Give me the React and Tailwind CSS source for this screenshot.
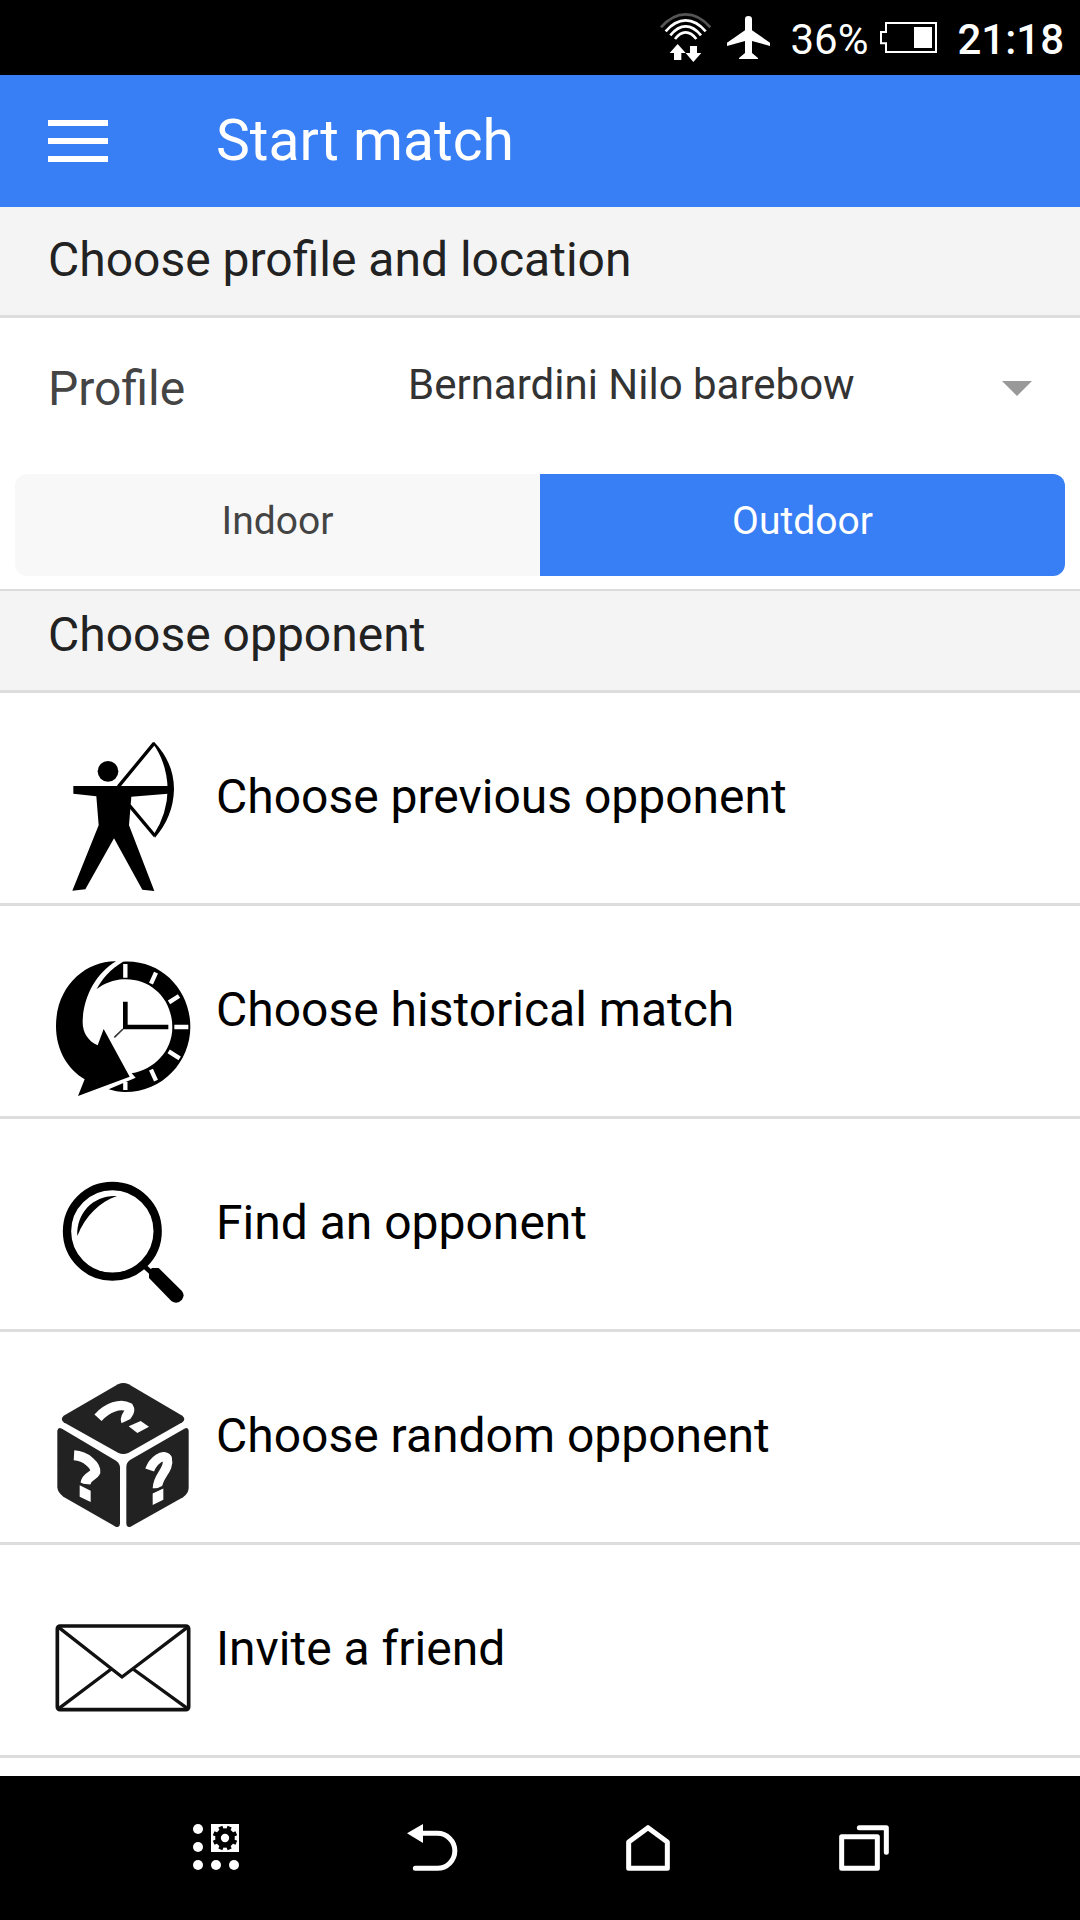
import React, { useState } from 'react';

const WifiIcon = () => (
  <svg viewBox="57 0 153 225" className="h-[75px] w-[51px]" fill="none" strokeWidth="8" aria-hidden="true">
    <path d="M60 82 Q94 43 134 43 Q174 43 208 82" stroke="#555" />
    <path d="M74 94 Q102 61 134 61 Q166 61 194 94" stroke="#fff" />
    <path d="M88 106 Q110 79 134 79 Q158 79 180 106" stroke="#fff" />
    <path d="M102 117 Q117 97 134 97 Q151 97 166 117" stroke="#fff" />
    <path d="M110 132 L134 159 H121 V180 H99 V159 H86 Z" fill="#fff" />
    <path d="M157 186 L181 159 H168 V138 H147 V159 H134 Z" fill="#fff" />
  </svg>
);

const PlaneIcon = () => (
  <svg viewBox="258 0 129 225" className="h-[75px] w-[43px]" fill="#fff" aria-hidden="true">
    <path d="M312 58 Q312 48 322 48 Q333 48 333 58 V91 L387 128 V138 L333 123 V159 L351 174 V177 H294 V174 L312 159 V123 L258 138 V128 L312 91 Z" />
  </svg>
);

const BatteryIcon = () => (
  <svg viewBox="717 0 171 225" className="h-[75px] w-[57px]" aria-hidden="true">
    <path d="M735 69 H885 V156 H735 V130 H720 V96 H735 Z" fill="none" stroke="#fff" strokeWidth="6" />
    <rect x="819" y="81" width="54" height="63" fill="#fff" />
  </svg>
);

const ArcherIcon = () => (
  <svg viewBox="24 18 432 504" className="h-[168px] w-36" aria-hidden="true">
    <circle cx="204" cy="154" r="31" />
    <path d="M100 198 H384 V221 L274 230 L267 316 L343 513 L307 509 L222 355 L136 508 L97 512 L176 316 L169 229 L100 221 Z" />
    <path d="M235 200 L342 70 M268 256 L345 348" fill="none" stroke="#000" strokeWidth="10" />
    <path d="M342 65 Q402 128 402 208 Q400 290 345 353 L341 344 Q382 282 383 208 Q381 128 338 70 Z" />
  </svg>
);

const HistoryIcon = () => (
  <svg viewBox="24 -3 432 504" className="h-[168px] w-36" aria-hidden="true">
    <path d="M228 64 C140 62 48 136 48 258 C48 332 84 388 134 418 L114 468 L269 410 L191 267 L173 316 C143 303 127 276 128 244 C130 170 168 100 228 64 Z" />
    <path d="M249 65 C366 58 451 152 451 260 C451 366 367 457 254 456 C238 456 221 453 206 448 L287 413 L275 400 C342 389 397 334 397 262 C397 174 330 114 250 118 C220 120 194 130 170 147 C186 118 211 87 249 65 Z" />
    <path
      d="M256 72 V113 M348 98 L333 131 M417 168 L387 187 M403 261 H445 M386 334 L419 355 M333 389 L348 422 M256 426 V450"
      fill="none"
      stroke="#fff"
      strokeWidth="13"
    />
    <path d="M249 185 H263 V254 H385 V268 H249 Z" />
    <path d="M249 267 L223 292" fill="none" stroke="#333" strokeWidth="5" />
  </svg>
);

const SearchIcon = () => (
  <svg viewBox="24 -24 432 504" className="h-[168px] w-36" aria-hidden="true">
    <circle cx="217" cy="214" r="136" fill="none" stroke="#000" strokeWidth="25" />
    <path d="M112 228 C109 156 163 104 231 108 C180 126 137 165 112 228 Z" />
    <path d="M312 318 L336 340" stroke="#000" strokeWidth="14" />
    <path d="M336 324 H356 L425 392 Q436 405 426 419 Q411 435 394 423 L327 354 V332 Z" />
  </svg>
);

const DiceIcon = () => (
  <svg viewBox="24 -15 432 504" className="h-[168px] w-36" fill="#222" aria-hidden="true">
    <path d="M234 43 Q250 35 266 43 L427 137 Q439 147 427 157 L266 248 Q250 256 234 248 L71 157 Q60 147 71 137 Z" />
    <path d="M52 182 Q54 170 66 176 L228 272 Q240 281 240 292 V460 Q239 474 227 470 L70 380 Q53 368 52 352 Z" />
    <path d="M446 182 Q445 170 433 176 L270 270 Q259 278 259 290 V460 Q260 474 272 470 L429 382 Q445 371 446 354 Z" />
    <g fill="none" stroke="#fff">
      <path d="M174 143 C202 112 242 98 266 112 C278 130 246 138 260 158" strokeWidth="29" />
      <path d="M102 256 C140 258 168 288 166 306 C160 320 138 318 136 342" strokeWidth="30" />
      <path d="M329 300 C340 270 370 250 382 266 C390 300 352 316 352 355" strokeWidth="28" />
    </g>
    <g fill="#fff">
      <path d="M266 169 L302 153 L327 170 L292 189 Z" />
      <path d="M119 346 L152 362 V396 L119 380 Z" />
      <path d="M338 370 L370 355 V389 L338 405 Z" />
    </g>
    <path d="M238 163 L276 145 L286 151 L258 172 Z M112 333 L156 354 V361 L112 340 Z M334 363 L374 344 V353 L334 372 Z" />
  </svg>
);

const MailIcon = () => (
  <svg viewBox="24 -66 432 504" className="h-[168px] w-36" fill="none" stroke="#111" aria-hidden="true">
    <rect x="52" y="78" width="394" height="251" rx="8" strokeWidth="11" />
    <path d="M56 82 L246 231 L442 82 M214 207 L56 326 M279 207 L443 326" strokeWidth="10" />
  </svg>
);

const AppsIcon = () => (
  <svg viewBox="87 153 162 162" className="size-[54px]" fill="#fff" aria-hidden="true">
    <circle cx="114" cy="177" r="15" />
    <circle cx="114" cy="231" r="15" />
    <circle cx="114" cy="285" r="15" />
    <circle cx="168" cy="285" r="15" />
    <circle cx="222" cy="285" r="15" />
    <rect x="153" y="162" width="84" height="84" />
    <circle cx="195" cy="204" r="21" fill="none" stroke="#000" strokeWidth="17" />
    <path
      d="M204 182 L209 170 M217 195 L229 190 M217 213 L229 218 M204 226 L209 238 M186 226 L181 238 M173 213 L161 218 M173 195 L161 190 M186 182 L181 170"
      fill="none"
      stroke="#000"
      strokeWidth="13"
    />
  </svg>
);

const BackIcon = () => (
  <svg viewBox="735 153 162 162" className="size-[54px]" fill="none" aria-hidden="true">
    <path d="M741 190 L789 162 V219 Z" fill="#fff" />
    <path d="M785 190 H832 A52 52 0 0 1 832 295 H766" stroke="#fff" strokeWidth="15" strokeLinecap="round" />
  </svg>
);

const HomeIcon = () => (
  <svg viewBox="123 153 162 162" className="size-[54px]" fill="none" aria-hidden="true">
    <path d="M146 216 L204 173 L262 216 V295 H146 Z" stroke="#fff" strokeWidth="15" strokeLinejoin="round" />
  </svg>
);

const RecentIcon = () => (
  <svg
    viewBox="771 153 162 162"
    className="size-[54px]"
    fill="none"
    stroke="#fff"
    strokeWidth="15"
    strokeLinejoin="round"
    strokeLinecap="round"
    aria-hidden="true"
  >
    <rect x="785" y="200" width="107" height="95" />
    <path d="M838 173 H919 V247" />
  </svg>
);

const options = [
  { label: 'Choose previous opponent', Icon: ArcherIcon },
  { label: 'Choose historical match', Icon: HistoryIcon },
  { label: 'Find an opponent', Icon: SearchIcon },
  { label: 'Choose random opponent', Icon: DiceIcon },
  { label: 'Invite a friend', Icon: MailIcon },
];

const navItems = [
  { label: 'Apps', Icon: AppsIcon },
  { label: 'Back', Icon: BackIcon },
  { label: 'Home', Icon: HomeIcon },
  { label: 'Recent', Icon: RecentIcon },
];

const App = () => {
  const [location, setLocation] = useState('Outdoor');

  return (
    <div className="flex min-h-screen flex-col bg-white font-['Roboto',sans-serif] text-5xl leading-[57px] text-black">
      <div className="flex items-center justify-end gap-3 bg-black pr-4 text-[42px] leading-[48px] text-white">
        <div className="flex gap-4">
          <WifiIcon />
          <PlaneIcon />
        </div>
        <span className="pt-1 pl-2">36%</span>
        <BatteryIcon />
        <span className="pt-1 pl-2 font-medium">21:18</span>
      </div>

      <header className="flex items-center gap-[108px] bg-[#387ef5] px-12 py-[34px] text-white">
        <button type="button" aria-label="Menu">
          <svg viewBox="0 0 60 42" className="h-[42px] w-[60px]" fill="#fff" aria-hidden="true">
            <path d="M0 0 H60 V6 H0 Z M0 18 H60 V24 H0 Z M0 36 H60 V42 H0 Z" />
          </svg>
        </button>
        <h1 className="text-[57px] leading-[64px]">Start match</h1>
      </header>

      <main className="flex-1">
        <h2 className="border-b-3 border-[#ddd] bg-[#f4f4f4] px-12 pt-6 pb-[27px] text-[#222]">
          Choose profile and location
        </h2>

        <div className="flex items-center px-12 py-[42px]">
          <label htmlFor="profile" className="w-1/3 text-[#444]">
            Profile
          </label>
          <div className="relative flex flex-1 items-center pl-8">
            <select
              id="profile"
              className="w-full appearance-none bg-transparent pb-2 text-[42px] leading-[49px] text-[#333] outline-none"
            >
              <option>Bernardini Nilo barebow</option>
            </select>
            <svg
              viewBox="0 0 30 15"
              className="pointer-events-none absolute right-0 h-[15px] w-[30px]"
              fill="#999"
              aria-hidden="true"
            >
              <path d="M0 0 H30 L15 15 Z" />
            </svg>
          </div>
        </div>

        <div className="px-[15px] pt-[15px] pb-[13px]">
          <div className="flex overflow-hidden rounded-xl text-[39px] leading-[45px]">
            {['Indoor', 'Outdoor'].map((name) => (
              <button
                key={name}
                type="button"
                aria-pressed={location === name}
                onClick={() => setLocation(name)}
                className={`flex-1 pt-[25px] pb-8 ${
                  location === name ? 'bg-[#387ef5] text-white' : 'bg-[#f8f8f8] text-[#444]'
                }`}
              >
                {name}
              </button>
            ))}
          </div>
        </div>

        <h2 className="border-t-2 border-b-3 border-[#ddd] bg-[#f4f4f4] px-12 pt-[15px] pb-[27px] text-[#222]">
          Choose opponent
        </h2>

        <ul>
          {options.map(({ label, Icon }) => (
            <li key={label} className="border-b-3 border-[#ddd]">
              <button type="button" className="flex w-full items-center gap-6 px-12 text-left">
                <span className="pt-[33px] pb-[9px]">
                  <Icon />
                </span>
                <span className="pb-1">{label}</span>
              </button>
            </li>
          ))}
        </ul>
      </main>

      <nav className="flex bg-black px-[10%] py-[45px]">
        {navItems.map(({ label, Icon }) => (
          <button key={label} type="button" aria-label={label} className="flex flex-1 justify-center">
            <Icon />
          </button>
        ))}
      </nav>
    </div>
  );
};

export default App;
